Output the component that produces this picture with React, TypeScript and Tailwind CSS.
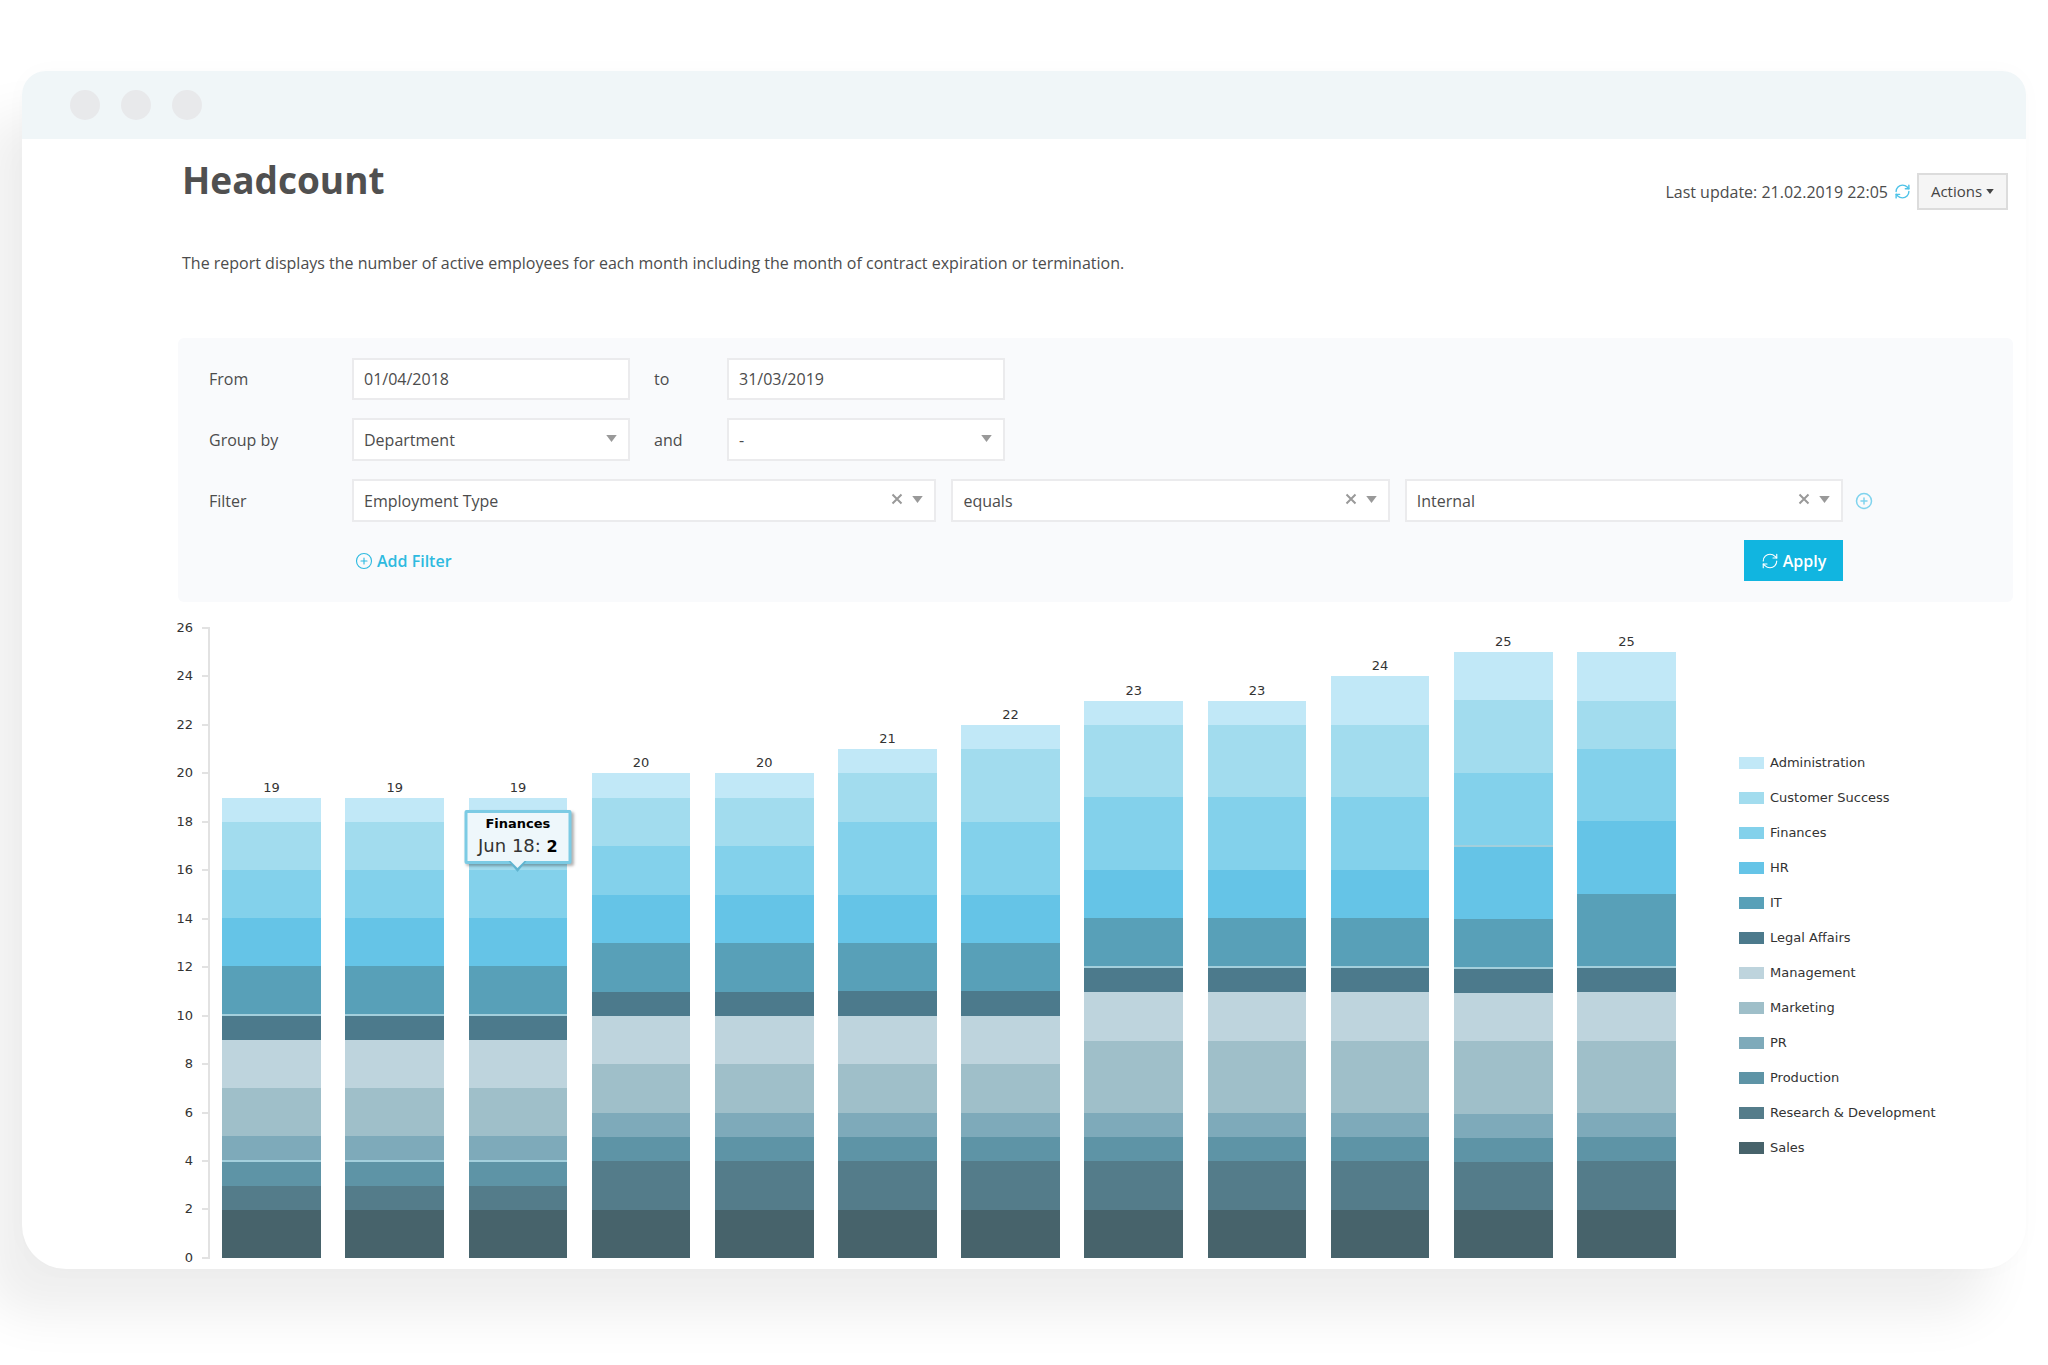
import type { ReactNode } from "react";
import { CirclePlus, RefreshCw } from "lucide-react";

const series = [
  { name: "Administration", color: "bg-[#c1e8f7]" },
  { name: "Customer Success", color: "bg-[#a2dcee]" },
  { name: "Finances", color: "bg-[#83d1eb]" },
  { name: "HR", color: "bg-[#65c4e7]" },
  { name: "IT", color: "bg-[#58a0b8]" },
  { name: "Legal Affairs", color: "bg-[#4c7a8c]" },
  { name: "Management", color: "bg-[#bed4dd]" },
  { name: "Marketing", color: "bg-[#9fbfc9]" },
  { name: "PR", color: "bg-[#7eaaba]" },
  { name: "Production", color: "bg-[#5e94a6]" },
  { name: "Research & Development", color: "bg-[#547c8a]" },
  { name: "Sales", color: "bg-[#47636b]" },
];

const AXIS_MAX = 26;
const ticks = [26, 24, 22, 20, 18, 16, 14, 12, 10, 8, 6, 4, 2, 0];

type Month = { values: number[]; seams: number[]; tooltip?: boolean };

// values follow the order of `series`; seams list the series whose top edge shows a light hairline
const months: Month[] = [
  { values: [1, 2, 2, 2, 2, 1, 2, 2, 1, 1, 1, 2], seams: [5, 9] },
  { values: [1, 2, 2, 2, 2, 1, 2, 2, 1, 1, 1, 2], seams: [5, 9] },
  { values: [1, 2, 2, 2, 2, 1, 2, 2, 1, 1, 1, 2], seams: [5, 9], tooltip: true },
  { values: [1, 2, 2, 2, 2, 1, 2, 2, 1, 1, 2, 2], seams: [] },
  { values: [1, 2, 2, 2, 2, 1, 2, 2, 1, 1, 2, 2], seams: [] },
  { values: [1, 2, 3, 2, 2, 1, 2, 2, 1, 1, 2, 2], seams: [] },
  { values: [1, 3, 3, 2, 2, 1, 2, 2, 1, 1, 2, 2], seams: [] },
  { values: [1, 3, 3, 2, 2, 1, 2, 3, 1, 1, 2, 2], seams: [5] },
  { values: [1, 3, 3, 2, 2, 1, 2, 3, 1, 1, 2, 2], seams: [5] },
  { values: [2, 3, 3, 2, 2, 1, 2, 3, 1, 1, 2, 2], seams: [5] },
  { values: [2, 3, 3, 3, 2, 1, 2, 3, 1, 1, 2, 2], seams: [3, 5] },
  { values: [2, 2, 3, 3, 3, 1, 2, 3, 1, 1, 2, 2], seams: [5] },
];

function Caret({ className }: { className: string }) {
  return (
    <svg viewBox="0 0 12 8" aria-hidden="true" className={className}>
      <path d="M0 0h12L6 8z" fill="currentColor" />
    </svg>
  );
}

function DateField({ id, value }: { id: string; value: string }) {
  return (
    <input
      id={id}
      type="text"
      defaultValue={value}
      className="h-[42px] w-[278px] border-2 border-[#ebebed] bg-white px-2.5 text-base text-[#4c4c4c] outline-none"
    />
  );
}

function SelectField({
  id,
  label,
  value,
  clearable,
  className,
}: {
  id: string;
  label?: string;
  value: string;
  clearable?: boolean;
  className: string;
}) {
  return (
    <div className={`relative ${className}`}>
      <select
        id={id}
        aria-label={label}
        defaultValue={value}
        className="h-[43px] w-full appearance-none border-2 border-[#ebebed] bg-white px-2.5 text-base text-[#4c4c4c] outline-none"
      >
        <option>{value}</option>
      </select>
      {clearable && (
        <button
          type="button"
          aria-label={`Clear ${value}`}
          className="absolute top-[14px] right-[33px] flex size-3 items-center justify-center text-[#999]"
        >
          <svg viewBox="0 0 12 12" className="size-3" aria-hidden="true">
            <path d="M1.500 1.500l9 9M10.500 1.500l-9 9" stroke="currentColor" strokeWidth="2" />
          </svg>
        </button>
      )}
      <Caret className="pointer-events-none absolute top-[17px] right-[13px] h-[7px] w-[11px] text-[#999]" />
    </div>
  );
}

function Label({ htmlFor, children }: { htmlFor: string; children: ReactNode }) {
  return (
    <label htmlFor={htmlFor} className="w-[143px] shrink-0">
      {children}
    </label>
  );
}

function Filters() {
  return (
    <form
      onSubmit={(e) => e.preventDefault()}
      className="rounded-md bg-[#f9fafc] pt-5 pr-[170px] pb-[21px] pl-[31px] text-base text-[#4c4c4c]"
    >
      <div className="flex h-[42px] items-center">
        <Label htmlFor="from">From</Label>
        <DateField id="from" value="01/04/2018" />
        <label htmlFor="to" className="w-[97px] pl-6">to</label>
        <DateField id="to" value="31/03/2019" />
      </div>
      <div className="mt-[18px] flex items-center">
        <Label htmlFor="group">Group by</Label>
        <SelectField id="group" value="Department" className="w-[278px]" />
        <label htmlFor="group2" className="w-[97px] pl-6">and</label>
        <SelectField id="group2" value="-" className="w-[278px]" />
      </div>
      <div className="relative mt-[18px] flex items-center">
        <Label htmlFor="filter">Filter</Label>
        <div className="grid grow grid-cols-[4fr_3fr_3fr] gap-[15px]">
          <SelectField id="filter" value="Employment Type" clearable className="w-full" />
          <SelectField id="operator" label="Operator" value="equals" clearable className="w-full" />
          <SelectField id="value" label="Value" value="Internal" clearable className="w-full" />
        </div>
        <button type="button" aria-label="Add condition" className="absolute -right-[30px] text-[#7fd3ee]">
          <CirclePlus className="size-[18px]" />
        </button>
      </div>
      <div className="mt-[18px] flex items-center justify-between pl-[146px]">
        <button type="button" className="flex items-center gap-1 font-semibold text-[#2ebae0]">
          <CirclePlus className="size-[18px]" strokeWidth={1.5} />
          Add Filter
        </button>
        <button
          type="submit"
          className="flex h-[41px] w-[99px] items-center justify-center gap-1 bg-[#11b5e0] font-semibold text-white"
        >
          <RefreshCw className="size-[18px]" strokeWidth={1.5} />
          Apply
        </button>
      </div>
    </form>
  );
}

function Tooltip() {
  return (
    <div className="absolute top-3 left-1/2 z-10 flex h-[54px] w-[107px] -translate-x-1/2 flex-col items-center justify-center rounded-xs border-3 border-[#7ccbe4] bg-[#eef7fb] text-black shadow-[2px_2px_3px_rgba(0,0,0,0.3)]">
      <span className="text-[13px] leading-5 font-bold">Finances</span>
      <span className="text-lg leading-6 whitespace-nowrap text-[#333]">
        Jun 18: <b className="text-base text-black">2</b>
      </span>
      <svg viewBox="0 0 20 13" aria-hidden="true" className="absolute -bottom-[13px] h-[13px] w-5">
        <path d="M1 0L10 11L19 0z" fill="#5fb4d0" />
        <path d="M3 0L10 7L17 0z" fill="#eef7fb" />
      </svg>
    </div>
  );
}

function Bar({ month }: { month: Month }) {
  const total = month.values.reduce((a, b) => a + b, 0);
  return (
    <div className="relative mx-auto w-4/5" style={{ height: `${(total / AXIS_MAX) * 100}%` }}>
      <span className="absolute -top-[19px] w-full text-center text-[13px] leading-[18px]">{total}</span>
      <div className="flex h-full flex-col">
        {month.values.map((value, i) => (
          <div
            key={series[i].name}
            className={`basis-0 ${series[i].color} ${month.seams.includes(i) ? "border-t-2 border-[#a3cfdc]" : ""}`}
            style={{ flexGrow: value }}
          />
        ))}
      </div>
      {month.tooltip && <Tooltip />}
    </div>
  );
}

function Chart() {
  return (
    <section
      aria-label="Headcount by department"
      className="-ml-0.5 flex pt-[26px] pb-[11px] text-[#333] [font-family:'DejaVu_Sans',Verdana,sans-serif]"
    >
      <div className="-my-[9px] flex w-[34px] shrink-0 flex-col justify-between text-[13px] leading-[18px]">
        {ticks.map((t) => (
          <div key={t} className="flex items-center justify-between">
            <span className="w-[17px] text-right">{t}</span>
            <span className="h-0.5 w-2 bg-[#e2e2e2]" />
          </div>
        ))}
      </div>
      <div className="-ml-0.5 grid h-[630px] grow grid-cols-12 items-end border-l-2 border-[#e2e2e2]">
        {months.map((m, i) => (
          <div key={i} className="flex h-full items-end">
            <Bar month={m} />
          </div>
        ))}
      </div>
      <ul className="flex w-[325px] shrink-0 flex-col self-start pt-[117px] pl-[51px]">
        {series.map((s) => (
          <li key={s.name} className="flex h-[35px] items-center gap-1.5 text-[13px] whitespace-nowrap">
            <span className={`h-3 w-[25px] ${s.color}`} />
            {s.name}
          </li>
        ))}
      </ul>
    </section>
  );
}

export default function App() {
  return (
    <div className="min-h-screen overflow-hidden bg-white px-[22px] pt-[71px] pb-24 [font-family:'Open_Sans',sans-serif]">
      <div className="overflow-hidden rounded-t-[24px] rounded-b-[44px] bg-white shadow-[-36px_46px_50px_rgba(0,0,0,0.065),0_0_24px_rgba(0,0,0,0.02)]">
        <div className="flex h-[68px] items-center gap-[21px] bg-[#f0f6f8] pl-12">
          <span className="size-[30px] rounded-full bg-[#e8e9eb]" />
          <span className="size-[30px] rounded-full bg-[#e8e9eb]" />
          <span className="size-[30px] rounded-full bg-[#e8e9eb]" />
        </div>
        <main className="pr-[13px] pl-[156px]">
          <header className="flex items-start justify-between pr-[5px] pl-1">
            <h1 className="pt-[17px] text-[37px] leading-[48px] font-bold text-[#505050]">Headcount</h1>
            <div className="flex items-center gap-1.5 pt-[34px] text-base text-[#4c4c4c]">
              <span>Last update: 21.02.2019 22:05</span>
              <button type="button" aria-label="Refresh" className="text-[#4fc3e8]">
                <RefreshCw className="size-[17px]" />
              </button>
              <button
                type="button"
                className="flex h-[37px] w-[91px] items-center justify-center gap-1 border-2 border-[#dcdcdc] bg-[#f5f5f5] text-[15px] text-[#444]"
              >
                Actions
                <Caret className="h-[5px] w-2 text-[#444]" />
              </button>
            </div>
          </header>
          <p className="pt-[41px] pb-[63px] pl-1 text-base leading-6 text-[#4c4c4c]">
            The report displays the number of active employees for each month including the month of contract
            expiration or termination.
          </p>
          <Filters />
          <Chart />
        </main>
      </div>
    </div>
  );
}
